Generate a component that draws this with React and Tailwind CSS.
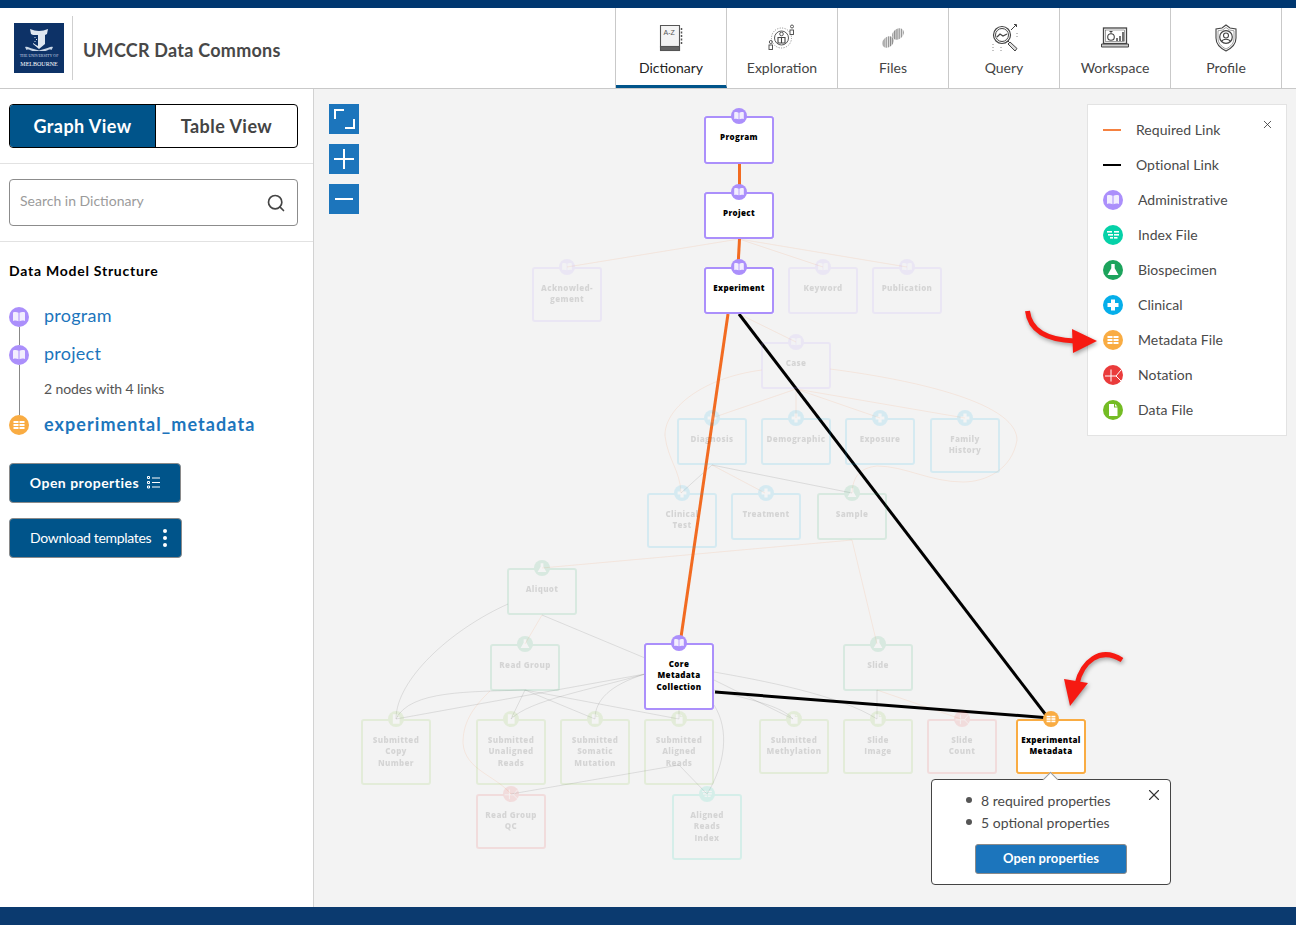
import { Search, X } from 'lucide-react'

const COLORS = {
  admin: '#ab8ffb',
  index: '#05d1a8',
  bio: '#1ca35c',
  clinical: '#05aeea',
  meta: '#f9ac43',
  notation: '#ea3b3b',
  data: '#74bc24',
}

// canvas starts at 314,89 - node coords below are page coords
const ORIGIN_X = 314
const ORIGIN_Y = 89

const NODES = [
  { t: ['Acknowled-', 'gement'], k: 'admin', x: 532, y: 267, w: 70, h: 55, faded: true },
  { t: ['Keyword'], k: 'admin', x: 788, y: 267, w: 70, h: 47, faded: true },
  { t: ['Publication'], k: 'admin', x: 872, y: 267, w: 70, h: 47, faded: true },
  { t: ['Case'], k: 'admin', x: 761, y: 342, w: 70, h: 47, faded: true },
  { t: ['Diagnosis'], k: 'clinical', x: 677, y: 418, w: 70, h: 47, faded: true },
  { t: ['Demographic'], k: 'clinical', x: 761, y: 418, w: 70, h: 47, faded: true },
  { t: ['Exposure'], k: 'clinical', x: 845, y: 418, w: 70, h: 47, faded: true },
  { t: ['Family', 'History'], k: 'clinical', x: 930, y: 418, w: 70, h: 55, faded: true },
  { t: ['Clinical', 'Test'], k: 'clinical', x: 647, y: 493, w: 70, h: 55, faded: true },
  { t: ['Treatment'], k: 'clinical', x: 731, y: 493, w: 70, h: 47, faded: true },
  { t: ['Sample'], k: 'bio', x: 817, y: 493, w: 70, h: 47, faded: true },
  { t: ['Aliquot'], k: 'bio', x: 507, y: 568, w: 70, h: 47, faded: true },
  { t: ['Read Group'], k: 'bio', x: 490, y: 644, w: 70, h: 47, faded: true },
  { t: ['Slide'], k: 'bio', x: 843, y: 644, w: 70, h: 47, faded: true },
  { t: ['Submitted', 'Copy', 'Number'], k: 'data', x: 361, y: 719, w: 70, h: 66, faded: true },
  { t: ['Submitted', 'Unaligned', 'Reads'], k: 'data', x: 476, y: 719, w: 70, h: 66, faded: true },
  { t: ['Submitted', 'Somatic', 'Mutation'], k: 'data', x: 560, y: 719, w: 70, h: 66, faded: true },
  { t: ['Submitted', 'Aligned', 'Reads'], k: 'data', x: 644, y: 719, w: 70, h: 66, faded: true },
  { t: ['Submitted', 'Methylation'], k: 'data', x: 759, y: 719, w: 70, h: 55, faded: true },
  { t: ['Slide', 'Image'], k: 'data', x: 843, y: 719, w: 70, h: 55, faded: true },
  { t: ['Slide', 'Count'], k: 'notation', x: 927, y: 719, w: 70, h: 55, faded: true },
  { t: ['Read Group', 'QC'], k: 'notation', x: 476, y: 794, w: 70, h: 55, faded: true },
  { t: ['Aligned', 'Reads', 'Index'], k: 'index', x: 672, y: 794, w: 70, h: 66, faded: true },
  { t: ['Program'], k: 'admin', x: 704, y: 116, w: 70, h: 48 },
  { t: ['Project'], k: 'admin', x: 704, y: 192, w: 70, h: 47 },
  { t: ['Experiment'], k: 'admin', x: 704, y: 267, w: 70, h: 47 },
  { t: ['Core', 'Metadata', 'Collection'], k: 'admin', x: 644, y: 643, w: 70, h: 67 },
  { t: ['Experimental', 'Metadata'], k: 'meta', x: 1016, y: 719, w: 70, h: 55 },
]

const FADED_ORANGE = [
  'M739 239L567 267',
  'M739 239L823 267',
  'M739 239L907 267',
  'M739 314L796 342',
  'M762 370C700 378 664 410 665 436C668 460 680 470 681 493',
  'M830 369C900 378 1017 400 1017 440C1012 470 985 482 963 482C930 482 905 466 877 466C860 468 853 476 852 493',
  'M796 389L712 418',
  'M796 389L796 418',
  'M796 389L880 418',
  'M796 389L965 418',
  'M712 465L765 493',
  'M852 540L542 568',
  'M852 540L877 644',
  'M542 615L525 644',
  'M490 691C470 710 463 725 463 743C465 770 495 775 511 794',
  'M877 690L961 719',
]

const FADED_GREY = [
  'M712 465L681 493',
  'M712 465L852 493',
  'M508 604C450 630 396 680 396 719',
  'M542 615L645 658',
  'M525 690C470 692 410 690 396 719',
  'M525 690L511 719',
  'M525 690L595 719',
  'M525 690L679 719',
  'M645 674L396 719',
  'M645 674C590 690 530 700 511 719',
  'M645 674C610 685 595 700 595 719',
  'M679 710L679 719',
  'M714 672C760 680 840 695 877 719',
  'M714 680L793 719',
  'M714 690C750 700 780 705 793 719',
  'M714 705C730 730 725 765 707 794',
  'M679 765L707 794',
  'M679 765L511 794',
  'M877 690L877 719',
]

function NodeIcon({ kind, size = 20 }) {
  const bg = COLORS[kind]
  return (
    <svg width={size} height={size} viewBox="0 0 20 20" className="block shrink-0">
      <circle cx="10" cy="10" r="10" fill={bg} />
      {kind === 'admin' && (
        <g fill="#fff" opacity="0.85">
          <path d="M4 5.500c2-.6 4-.5 5.500.3v8.400c-1.500-.8-3.500-.9-5.500-.3z" />
          <path d="M16 5.500c-2-.6-4-.5-5.500.3v8.400c1.500-.8 3.500-.9 5.500-.3z" />
        </g>
      )}
      {kind === 'index' && (
        <g fill="#fff">
          <rect x="4" y="6" width="5" height="1.600" />
          <rect x="11" y="6" width="5" height="1.600" />
          <rect x="5" y="9" width="5" height="1.600" />
          <rect x="11" y="9" width="5" height="1.600" />
          <rect x="7" y="12" width="3" height="1.600" />
          <rect x="11" y="12" width="3.500" height="1.600" />
        </g>
      )}
      {kind === 'bio' && <path d="M8.300 4h3.400v4.300L15.500 15H4.500l3.800-6.700z" fill="#fff" />}
      {kind === 'clinical' && <path d="M8 4.500h4v3.500h3.500v4H12v3.500H8V12H4.500V8H8z" fill="#fff" />}
      {kind === 'meta' && (
        <g fill="#fff">
          <rect x="4.500" y="6" width="5" height="2" />
          <rect x="10.500" y="6" width="5" height="2" />
          <rect x="4.500" y="9" width="5" height="2" />
          <rect x="10.500" y="9" width="5" height="2" />
          <rect x="4.500" y="12" width="5" height="2" />
          <rect x="10.500" y="12" width="5" height="2" />
        </g>
      )}
      {kind === 'notation' && (
        <path d="M2 11h11M8 4.500v12M13 11l5-6M13 11l5 5" stroke="#fff" strokeWidth="1" fill="none" />
      )}
      {kind === 'data' && <path d="M6 4h5v3.500h3.500V16H6zM12 4l2.500 2.500H12z" fill="#fff" />}
    </svg>
  )
}

function GraphNode({ node }) {
  const color = COLORS[node.k]
  return (
    <div
      className={`absolute ${node.faded ? 'opacity-[0.12]' : 'bg-white'}`}
      style={{ left: node.x - ORIGIN_X, top: node.y - ORIGIN_Y, width: node.w, height: node.h }}
    >
      <div
        className="h-full rounded-[3px] border-2 pt-[13px] text-center font-['Open_Sans',sans-serif] text-[8px] leading-[11.300px] font-extrabold tracking-[0.35px] text-black"
        style={{ borderColor: color }}
      >
        {node.t.map((line) => (
          <div key={line}>{line}</div>
        ))}
      </div>
      <div className="absolute top-[-8px] left-1/2 -ml-2">
        <NodeIcon kind={node.k} size={16} />
      </div>
    </div>
  )
}

function DictionaryIcon() {
  return (
    <svg width="24" height="28" viewBox="0 0 24 28" fill="none" stroke="#555" strokeWidth="1.100">
      <path d="M1.500 1.500h19v25H3.500c-2 0-2-1-2-3z" fill="#f4f4f4" />
      <rect x="1.500" y="22.500" width="19" height="4" fill="#666" />
      <path d="M22.500 4v17" strokeWidth="1.500" strokeDasharray="2 1.500" />
      <text x="4.500" y="11" fontSize="7" fill="#555" stroke="none" fontFamily="Liberation Sans, sans-serif">A-Z</text>
    </svg>
  )
}

function ExplorationIcon() {
  return (
    <svg width="28" height="27" viewBox="0 0 28 27" fill="none" stroke="#444" strokeWidth="0.900">
      <circle cx="13.500" cy="14" r="10" strokeDasharray="1 1.500" stroke="#777" />
      <circle cx="13.500" cy="14" r="7" />
      <circle cx="13.500" cy="10" r="1.800" />
      <path d="M10 13.500h7v5.500h-7zM13.500 13.500V19" strokeWidth="1.100" />
      <rect x="22" y="6" width="3.500" height="4.500" fill="#fff" />
      <circle cx="24" cy="2.500" r="1.500" />
      <rect x="1" y="21" width="3.500" height="4.500" fill="#fff" />
      <circle cx="2.800" cy="18" r="1.500" />
    </svg>
  )
}

function FilesIcon() {
  return (
    <svg width="24" height="22" viewBox="0 0 24 22" fill="none">
      <defs>
        <pattern id="dna-hatch" width="2.200" height="2.200" patternUnits="userSpaceOnUse" patternTransform="rotate(45)">
          <rect width="2.200" height="2.200" fill="#e6e6e6" />
          <rect width="1.100" height="2.200" fill="#858585" />
        </pattern>
      </defs>
      <ellipse cx="7" cy="15" rx="6.500" ry="5" transform="rotate(-45 7 15)" fill="url(#dna-hatch)" />
      <ellipse cx="17" cy="7" rx="6.500" ry="5" transform="rotate(-45 17 7)" fill="url(#dna-hatch)" />
    </svg>
  )
}

function QueryIcon() {
  return (
    <svg width="29" height="29" viewBox="0 0 29 29" fill="none" stroke="#444" strokeWidth="1">
      <circle cx="12" cy="12" r="8.500" strokeWidth="1.200" />
      <circle cx="12" cy="12" r="6.500" />
      <path d="M7 14l3-3 3 2 4-2" strokeWidth="1.300" />
      <path d="M18 18l2 2" />
      <path d="M20 19l7 6.500-2 2.500-7-7z" fill="#ddd" />
      <path d="M21 7l5-5M24 1.500h2.500V4" />
      <path d="M3 21v7M11 24v5M27 10v6" strokeDasharray="1 2" stroke="#888" />
    </svg>
  )
}

function WorkspaceIcon() {
  return (
    <svg width="28" height="22" viewBox="0 0 28 22" fill="none" stroke="#444" strokeWidth="1">
      <rect x="2.500" y="1" width="23" height="15.500" strokeWidth="1.300" />
      <rect x="4.500" y="3" width="19" height="11.500" strokeWidth="0.500" />
      <circle cx="10" cy="10" r="3.300" strokeWidth="1.100" />
      <path d="M10 6.500V4.500M8.500 4.500h3" />
      <path d="M16 14v-3M19 14V9M22 14V5" strokeWidth="1.500" />
      <path d="M.5 17h27v3H.5z" fill="#ccc" />
    </svg>
  )
}

function ProfileIcon() {
  return (
    <svg width="24" height="28" viewBox="0 0 24 28" fill="none" stroke="#444" strokeWidth="1.100">
      <path d="M12 1l4 3 6 1v9c0 6-4 10-10 13C6 24 2 20 2 14V5l6-1z" />
      <path d="M12 3.500l3.500 2.500 4.500.8V14c0 5-3 8.500-8 11-5-2.500-8-6-8-11V6.800L8.500 6z" strokeWidth="0.500" />
      <circle cx="12" cy="13" r="6.300" strokeWidth="1.200" />
      <circle cx="12" cy="11.500" r="2.500" />
      <path d="M7.500 17.500c1.500-3 7.500-3 9 0" />
    </svg>
  )
}

const TABS = [
  { label: 'Dictionary', Icon: DictionaryIcon, active: true },
  { label: 'Exploration', Icon: ExplorationIcon },
  { label: 'Files', Icon: FilesIcon },
  { label: 'Query', Icon: QueryIcon },
  { label: 'Workspace', Icon: WorkspaceIcon },
  { label: 'Profile', Icon: ProfileIcon },
]

const LEGEND = [
  ['Administrative', 'admin'],
  ['Index File', 'index'],
  ['Biospecimen', 'bio'],
  ['Clinical', 'clinical'],
  ['Metadata File', 'meta'],
  ['Notation', 'notation'],
  ['Data File', 'data'],
]

function Logo() {
  return (
    <div className="flex h-[50px] w-[50px] flex-col items-center bg-[#0d3267] pt-[5px] text-white">
      <svg width="30" height="25" viewBox="0 0 30 25">
        <path d="M6 1c3 1 6 2 9 2s6-1 9-2l-1 5-2 1v9l-6 5-6-5V7L7 6z" fill="#dfe7f0" />
        <path d="M9 7h5v11l-2-1-3-2z" fill="#0d3267" />
        <path d="M10.500 9h1v1h-1zM12 11h1v1h-1zM10.500 13h1v1h-1z" fill="#dfe7f0" />
        <path d="M1 19c3-1 4 1 7 1.500l7 2 7-2c3-.5 4-2.500 7-1.500l-1.500 3c-2-1-3 0-6 1H8.500c-3-1-4-2-6-1z" fill="#c9d6e6" />
      </svg>
      <div className="font-['Liberation_Serif',serif] text-[4px] leading-[5px] whitespace-nowrap text-[#cbd6e6]">THE UNIVERSITY OF</div>
      <div className="mt-[3px] font-['Liberation_Serif',serif] text-[6px] leading-[7px] whitespace-nowrap">MELBOURNE</div>
    </div>
  )
}

function Header() {
  return (
    <header className="flex h-[81px] shrink-0 items-stretch border-b border-[#c9c9c9] bg-white">
      <div className="flex w-[615px] items-center pl-[14px]">
        <Logo />
        <div className="ml-2 h-[64px] w-px bg-[#cfcfcf]" />
        <div className="mt-1 ml-[10px] text-[18px] font-bold tracking-[0.25px] text-[#484848]">UMCCR Data Commons</div>
      </div>
      <nav className="flex border-l border-[#c9c9c9]">
        {TABS.map(({ label, Icon, active }) => (
          <div
            key={label}
            className={`flex w-[111px] flex-col items-center border-r border-[#c9c9c9] ${active ? 'border-b-[3px] border-b-[#00548a]' : ''}`}
          >
            <div className="flex h-[45px] w-full items-center justify-center pt-[14px]">
              <Icon />
            </div>
            <div className={`mt-[6px] text-[14px] leading-[18px] ${active ? 'text-[#222]' : 'text-[#444]'}`}>{label}</div>
          </div>
        ))}
      </nav>
    </header>
  )
}

function Sidebar() {
  return (
    <aside className="w-[314px] shrink-0 border-r border-[#d2d2d2] bg-white">
      <div className="border-b border-[#e2e2e2] px-[9px] pt-[15px] pb-[15px]">
        <div className="flex h-[44px] w-[289px] overflow-hidden rounded-[4px] border border-black text-[18px] font-bold tracking-[0.45px]">
          <div className="flex w-[145px] items-center justify-center bg-[#00548a] text-white">Graph View</div>
          <div className="flex flex-1 items-center justify-center border-l border-black text-[#444]">Table View</div>
        </div>
      </div>
      <div className="border-b border-[#e2e2e2] px-[9px] pt-[15px] pb-[15px]">
        <div className="flex h-[47px] w-[289px] items-center justify-between rounded-[4px] border border-[#8c8c8c] pr-[11px] pl-[10px]">
          <span className="mb-[4px] text-[14px] text-[#9b9b9b]">Search in Dictionary</span>
          <Search size={20} strokeWidth={2} className="text-[#444]" />
        </div>
      </div>
      <div className="px-[9px] pt-[19px]">
        <h2 className="text-[14px] leading-[20px] font-bold tracking-[0.75px] text-black">Data Model Structure</h2>
        <div className="mt-[26px] flex">
          <div className="flex w-[20px] flex-col items-center">
            <NodeIcon kind="admin" />
            <div className="h-[18px] w-px bg-[#888]" />
            <NodeIcon kind="admin" />
            <div className="h-[50px] w-px bg-[#888]" />
            <NodeIcon kind="meta" />
          </div>
          <div className="ml-[15px] flex flex-col text-[#1c75bc]">
            <div className="-mt-[2px] text-[18px] leading-[20px] tracking-[0.25px]">program</div>
            <div className="mt-[18px] text-[18px] leading-[20px] tracking-[0.25px]">project</div>
            <div className="mt-[17px] text-[14px] leading-[18px] tracking-[-0.1px] text-[#555]">2 nodes with 4 links</div>
            <div className="mt-[16px] text-[18px] leading-[20px] font-bold tracking-[1.07px]">experimental_metadata</div>
          </div>
        </div>
        <button className="mt-[28px] flex h-[40px] w-[172px] items-center justify-center gap-2 rounded-[4px] border border-[#8a8a8a] bg-[#00548a] pb-px text-[14px] font-bold tracking-[0.5px] text-white">
          Open properties
          <svg width="13" height="13" viewBox="0 0 13 13" fill="none" stroke="#fff">
            <path d="M5 2h8M5 6.500h8M5 11h8" />
            <path d="M.5.5h2v2h-2zM.5 5.500h2v2h-2zM.5 10h2v2h-2z" />
          </svg>
        </button>
        <button className="mt-[15px] flex h-[40px] w-[173px] items-center rounded-[4px] border border-[#8a8a8a] bg-[#00548a] pb-px pl-5 text-[14px] tracking-[-0.33px] text-white">
          Download templates
          <span className="ml-[12px] flex flex-col gap-[3px]">
            <span className="h-1 w-1 rounded-full bg-white" />
            <span className="h-1 w-1 rounded-full bg-white" />
            <span className="h-1 w-1 rounded-full bg-white" />
          </span>
        </button>
      </div>
    </aside>
  )
}

function LinksLayer() {
  return (
    <svg className="absolute inset-0" width="982" height="818" viewBox={`${ORIGIN_X} ${ORIGIN_Y} 982 818`} fill="none">
      <g stroke="#f26b21" strokeOpacity="0.1" strokeWidth="1">
        {FADED_ORANGE.map((d) => (
          <path key={d} d={d} />
        ))}
      </g>
      <g stroke="#333" strokeOpacity="0.12" strokeWidth="1">
        {FADED_GREY.map((d) => (
          <path key={d} d={d} />
        ))}
      </g>
      <g stroke="#f26b21" strokeWidth="3">
        <path d="M739.500 164L739.500 192" />
        <path d="M739.500 239L738 267" />
        <path d="M728 314L680 644" />
      </g>
      <g stroke="#000" strokeWidth="3">
        <path d="M739 314L1049 719" />
        <path d="M715 692L1050 718" />
      </g>
    </svg>
  )
}

function RedArrows() {
  return (
    <svg className="pointer-events-none absolute inset-0 drop-shadow-[1px_2px_2px_rgba(0,0,0,0.35)]" width="982" height="818" viewBox={`${ORIGIN_X} ${ORIGIN_Y} 982 818`} fill="none">
      <path d="M1027.500 311C1030 332 1048 340 1075 341" stroke="#f61a12" strokeWidth="5" />
      <path d="M1072 329L1097 341L1073 353z" fill="#f61a12" />
      <path d="M1122 660C1100 646 1082 662 1077 684" stroke="#f61a12" strokeWidth="5" />
      <path d="M1064 679L1088 683L1070 706z" fill="#f61a12" />
    </svg>
  )
}

function Legend() {
  return (
    <div className="absolute top-[15px] right-[9px] h-[332px] w-[200px] border border-[#e3e3e3] bg-white pt-[7px] pl-[15px] text-[14px] tracking-[0.05px] text-[#4a4a4a]">
      <X size={13} strokeWidth={1.500} className="absolute top-[13px] right-[12px] text-[#333]" />
      <div className="flex h-[35px] items-center">
        <div className="h-[2px] w-[18px] bg-[#f58140]" />
        <span className="ml-[15px]">Required Link</span>
      </div>
      <div className="flex h-[35px] items-center">
        <div className="h-[2px] w-[18px] bg-black" />
        <span className="ml-[15px]">Optional Link</span>
      </div>
      {LEGEND.map(([label, kind]) => (
        <div key={label} className="flex h-[35px] items-center">
          <NodeIcon kind={kind} />
          <span className="ml-[15px]">{label}</span>
        </div>
      ))}
    </div>
  )
}

function ZoomControls() {
  return (
    <div className="absolute top-[15px] left-[15px] flex flex-col gap-[10px]">
      <div className="h-[30px] w-[30px] bg-[#1c75bc]">
        <svg width="30" height="30" viewBox="0 0 30 30" fill="none" stroke="#fff" strokeWidth="2">
          <path d="M6 15V6h9M25 15v9h-9" />
        </svg>
      </div>
      <div className="h-[30px] w-[30px] bg-[#1c75bc]">
        <svg width="30" height="30" viewBox="0 0 30 30" fill="none" stroke="#fff" strokeWidth="2">
          <path d="M5 15h20M15 5v20" />
        </svg>
      </div>
      <div className="h-[30px] w-[30px] bg-[#1c75bc]">
        <svg width="30" height="30" viewBox="0 0 30 30" fill="none" stroke="#fff" strokeWidth="2">
          <path d="M6 15h18" />
        </svg>
      </div>
    </div>
  )
}

function NodePopup() {
  return (
    <div className="absolute top-[690px] left-[617px] h-[106px] w-[240px] rounded-[4px] border border-[#444] bg-white text-[14px] text-[#4a4a4a]">
      <div className="absolute top-[-6px] left-[113px] h-[11px] w-[11px] rotate-45 border-t border-l border-[#999] bg-white" />
      <X size={18} strokeWidth={1.500} className="absolute top-[6px] right-[7px] text-[#333]" />
      <ul className="pt-[9px] pl-[34px]">
        <li className="flex h-[22px] items-center">
          <span className="h-[6px] w-[6px] rounded-full bg-[#555]" />
          <span className="ml-[9px]">8 required properties</span>
        </li>
        <li className="flex h-[22px] items-center">
          <span className="h-[6px] w-[6px] rounded-full bg-[#555]" />
          <span className="ml-[9px]">5 optional properties</span>
        </li>
      </ul>
      <button className="mx-auto mt-[11px] flex h-[30px] w-[152px] items-center justify-center rounded-[3px] border border-[#8a8a8a] bg-[#1c75bc] text-[13px] font-bold tracking-[0.1px] text-white">
        Open properties
      </button>
    </div>
  )
}

export default function App() {
  return (
    <div className="flex h-[925px] flex-col overflow-hidden bg-white font-['Lato','Noto_Sans',sans-serif]">
      <div className="h-2 shrink-0 bg-[#003770]" />
      <Header />
      <div className="flex min-h-0 flex-1">
        <Sidebar />
        <main className="relative flex-1 overflow-hidden bg-[#f3f3f3]">
          <LinksLayer />
          {NODES.map((node) => (
            <GraphNode key={node.t.join(' ')} node={node} />
          ))}
          <ZoomControls />
          <Legend />
          <NodePopup />
          <RedArrows />
        </main>
      </div>
      <div className="h-[18px] shrink-0 bg-[#0b3a6f]" />
    </div>
  )
}
